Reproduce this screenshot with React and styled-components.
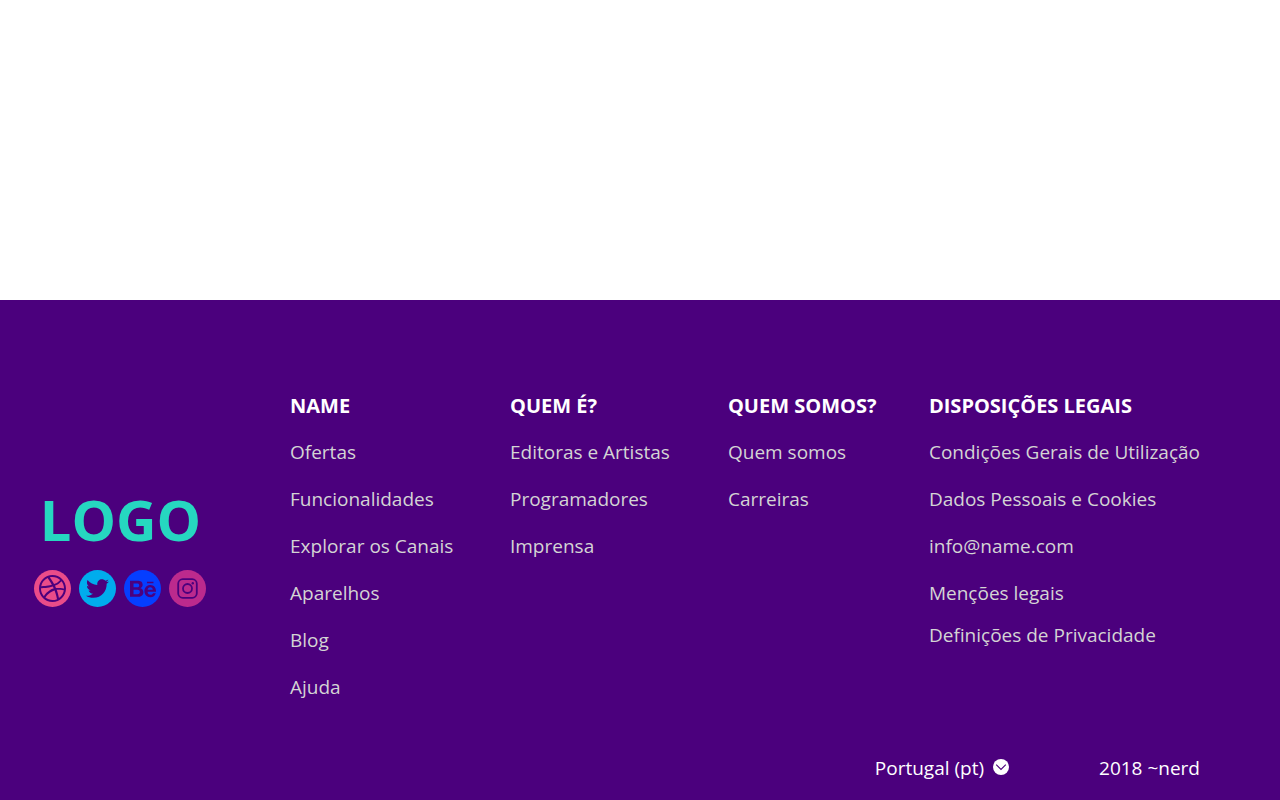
import React from "react";
import styled, { createGlobalStyle } from "styled-components";
import { FaBehance, FaTwitter } from "react-icons/fa";
import { SiDribbble } from "react-icons/si";

const PURPLE = "#4b007d";

const GlobalStyle = createGlobalStyle`
  *, *::before, *::after { box-sizing: border-box; }
  body {
    margin: 0;
    background: #ffffff;
    font-family: "Segoe UI", "Open Sans", "Noto Sans", sans-serif;
    font-size: 19px;
    line-height: 27px;
  }
`;

const Page = styled.div`
  display: flex;
  flex-direction: column;
  min-height: 100vh;
`;

const Content = styled.main`
  flex: 1;
`;

const Footer = styled.footer`
  display: grid;
  grid-template-columns: 256px 1fr;
  padding: 92px 80px 18px 34px;
  background: ${PURPLE};
  color: #ffffff;
`;

const Brand = styled.div`
  display: flex;
  flex-direction: column;
  gap: 20px;
  padding-top: 96px;
`;

const Logo = styled.a`
  width: 173px;
  color: #26d7c0;
  font-size: 56px;
  font-weight: 700;
  line-height: 62px;
  text-align: center;
  text-decoration: none;
`;

const SocialList = styled.ul`
  display: flex;
  gap: 8px;
  margin: 0;
  padding: 0;
  list-style: none;
`;

const SocialLink = styled.a`
  display: flex;
  align-items: center;
  justify-content: center;
  width: 37px;
  height: 37px;
  border-radius: 50%;
  background: ${({ $color }) => $color};
  color: ${PURPLE};
`;

const Nav = styled.nav`
  display: grid;
  grid-template-columns: 220fr 218fr 201fr 271fr;
`;

const Heading = styled.h2`
  margin: 0;
  font-size: 20px;
  font-weight: 700;
  white-space: nowrap;
`;

const LinkList = styled.ul`
  margin: 0;
  padding: 0;
  list-style: none;
`;

const LinkItem = styled.li`
  margin-top: ${({ $tight }) => ($tight ? "15px" : "20px")};
  white-space: nowrap;
`;

const FooterLink = styled.a`
  color: #d4d4d4;
  text-decoration: none;

  &:hover {
    color: #ffffff;
  }
`;

const BottomBar = styled.div`
  grid-column: 2;
  display: flex;
  justify-content: flex-end;
  gap: 90px;
  margin-top: 54px;
`;

const RegionPicker = styled.label`
  position: relative;
  display: flex;
  align-items: center;
`;

const RegionSelect = styled.select`
  appearance: none;
  field-sizing: content;
  margin: 0;
  padding: 0 25px 0 0;
  border: 0;
  background: transparent;
  color: inherit;
  font: inherit;
  cursor: pointer;

  option {
    color: ${PURPLE};
  }
`;

const Chevron = styled.svg`
  position: absolute;
  top: 4px;
  right: 0;
  width: 16px;
  height: 16px;
  pointer-events: none;
`;

const InstagramIcon = () => (
  <svg width="21" height="21" viewBox="0 0 21 21" fill="none" stroke="currentColor" strokeWidth="1.8" aria-hidden="true">
    <rect x="1.2" y="1.2" width="18.6" height="18.6" rx="4.6" />
    <circle cx="10.5" cy="10.5" r="4.5" />
    <circle cx="15.8" cy="5.2" r="1.2" fill="currentColor" stroke="none" />
  </svg>
);

const SOCIALS = [
  { name: "Dribbble", color: "#ea4c89", icon: <SiDribbble size={27} /> },
  { name: "Twitter", color: "#00aced", icon: <FaTwitter size={23} /> },
  { name: "Behance", color: "#053eff", icon: <FaBehance size={26} /> },
  { name: "Instagram", color: "#bc2a8d", icon: <InstagramIcon /> },
];

const COLUMNS = [
  {
    title: "NAME",
    links: ["Ofertas", "Funcionalidades", "Explorar os Canais", "Aparelhos", "Blog", "Ajuda"],
  },
  { title: "QUEM É?", links: ["Editoras e Artistas", "Programadores", "Imprensa"] },
  { title: "QUEM SOMOS?", links: ["Quem somos", "Carreiras"] },
  {
    title: "DISPOSIÇÕES LEGAIS",
    links: [
      "Condições Gerais de Utilização",
      "Dados Pessoais e Cookies",
      "info@name.com",
      "Menções legais",
      "Definições de Privacidade",
    ],
    tightLast: true,
  },
];

export default function App() {
  return (
    <Page>
      <GlobalStyle />
      <Content />
      <Footer>
        <Brand>
          <Logo href="#">LOGO</Logo>
          <SocialList>
            {SOCIALS.map(({ name, color, icon }) => (
              <li key={name}>
                <SocialLink href="#" aria-label={name} $color={color}>
                  {icon}
                </SocialLink>
              </li>
            ))}
          </SocialList>
        </Brand>
        <Nav>
          {COLUMNS.map(({ title, links, tightLast }) => (
            <section key={title}>
              <Heading>{title}</Heading>
              <LinkList>
                {links.map((text, i) => (
                  <LinkItem key={text} $tight={tightLast && i === links.length - 1}>
                    <FooterLink href="#">{text}</FooterLink>
                  </LinkItem>
                ))}
              </LinkList>
            </section>
          ))}
        </Nav>
        <BottomBar>
          <RegionPicker>
            <RegionSelect aria-label="País" defaultValue="pt">
              <option value="pt">Portugal (pt)</option>
            </RegionSelect>
            <Chevron viewBox="0 0 16 16" aria-hidden="true">
              <circle cx="8" cy="8" r="8" fill="#ffffff" />
              <path d="M3.2 5.6 8 10.4 12.8 5.6" fill="none" stroke={PURPLE} strokeWidth="1.1" />
            </Chevron>
          </RegionPicker>
          <span>2018 ~nerd</span>
        </BottomBar>
      </Footer>
    </Page>
  );
}
